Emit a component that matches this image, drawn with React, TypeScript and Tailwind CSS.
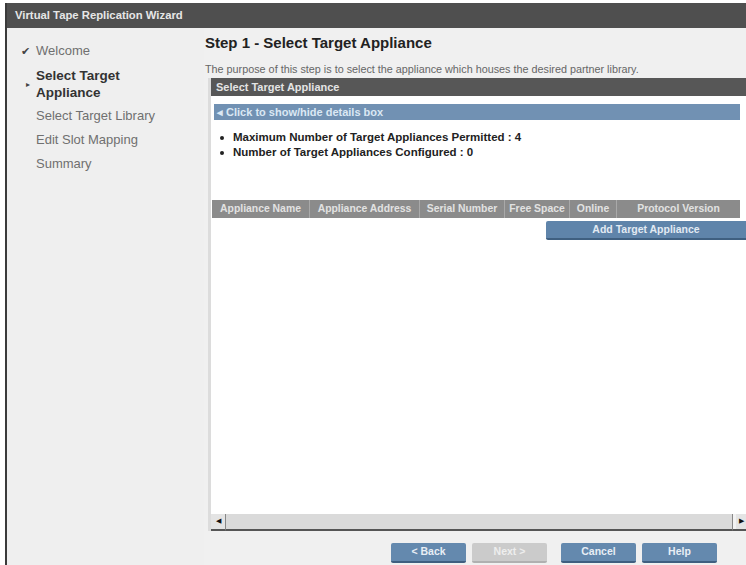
import React from "react";

const STEPS = [
  { label: "Welcome", state: "done" },
  { label: "Select Target Appliance", state: "current" },
  { label: "Select Target Library", state: "todo" },
  { label: "Edit Slot Mapping", state: "todo" },
  { label: "Summary", state: "todo" },
];

const COLUMNS = [
  { label: "Appliance Name", w: "w-[97px]" },
  { label: "Appliance Address", w: "w-[110px]" },
  { label: "Serial Number", w: "w-[85px]" },
  { label: "Free Space", w: "w-[65px]" },
  { label: "Online", w: "w-[47px]" },
  { label: "Protocol Version", w: "flex-1" },
];

function WizButton({ label, disabled }: { label: string; disabled?: boolean }) {
  return (
    <button
      type="button"
      disabled={disabled}
      className={`h-[20px] w-[75px] rounded-[2px] border-b-2 text-[10.5px] font-bold ${
        disabled
          ? "border-[#b0b0b0] bg-[#cbcbcb] text-[#eeeeee]"
          : "border-[#3f5f80] bg-[#6489ae] text-[#e8eef5]"
      }`}
    >
      {label}
    </button>
  );
}

export default function App() {
  return (
    <div
      className="h-[565px] w-[746px] overflow-hidden bg-white pl-[5px] pt-[3px]"
      style={{ fontFamily: '"Liberation Sans", Arial, sans-serif' }}
    >
      <div className="flex h-full flex-col border-l-2 border-[#3a3a3a]">
        {/* Title bar */}
        <div className="flex h-[25px] items-center bg-[#4f4f4f] pl-[8px] text-[11.3px] font-bold text-[#e6e6e6]">
          Virtual Tape Replication Wizard
        </div>

        <div className="flex min-h-0 flex-1">
          {/* Left — step list */}
          <div className="w-[197px] shrink-0 bg-[#efefef] pt-[15px] text-[13px] text-[#707070]">
            {STEPS.map((s) => (
              <div
                key={s.label}
                className={`flex items-start ${s.state === "current" ? "mb-[7px] mt-[3px]" : "mb-[8px]"}`}
              >
                <span className="flex w-[29px] shrink-0 justify-end pr-[6px] text-[#444]">
                  {s.state === "done" && <span className="text-[11px] leading-[16px]">✔</span>}
                  {s.state === "current" && <span className="mt-[10px] text-[8px] leading-[15px]">▸</span>}
                </span>
                <span
                  className={
                    s.state === "current"
                      ? "w-[100px] text-[13.5px] font-bold leading-[17px] text-[#333]"
                      : "leading-[16px]"
                  }
                >
                  {s.label}
                </span>
              </div>
            ))}
          </div>

          {/* Right — step content */}
          <div className="flex min-w-0 flex-1 flex-col bg-[#f0f0f0] pl-[1px]">
            <h1 className="mt-[6px] text-[15px] font-bold leading-[17px] text-[#222]">
              Step 1 - Select Target Appliance
            </h1>
            <p className="mt-[12px] text-[10.8px] leading-[12px] text-[#666]">
              The purpose of this step is to select the appliance which houses the desired partner library.
            </p>

            <div className="ml-[3px] mt-[3px] flex min-h-0 flex-1 flex-col border-l-[3px] border-[#dcdcdc]">
              <div className="flex h-[18px] items-center bg-[#575757] pl-[5px] text-[11px] font-bold text-[#e4e4e4]">
                Select Target Appliance
              </div>

              <div className="flex-1 bg-white pt-[8px]">
                <div className="ml-[3px] mr-[6px] flex h-[16px] items-center bg-[#7191b3] pl-[3px] text-[11px] font-bold text-[#dbe8f4]">
                  ◂ Click to show/hide details box
                </div>
                <ul className="mt-[12px] space-y-[4px] pl-[9px] text-[11.5px] font-bold leading-[11px] text-[#222]">
                  <li className="flex items-center gap-[9px]">
                    <span className="h-[4px] w-[4px] rounded-full bg-[#222]" />
                    Maximum Number of Target Appliances Permitted : 4
                  </li>
                  <li className="flex items-center gap-[9px]">
                    <span className="h-[4px] w-[4px] rounded-full bg-[#222]" />
                    Number of Target Appliances Configured : 0
                  </li>
                </ul>

                <div className="ml-[1px] mr-[6px] mt-[42px] flex h-[18px] bg-[#8b8b8b] text-[10.4px] font-bold text-[#e2e2e2]">
                  {COLUMNS.map((c, i) => (
                    <div
                      key={c.label}
                      className={`${c.w} flex items-center justify-center truncate ${
                        i > 0 ? "border-l border-[#a9a9a9]" : ""
                      }`}
                    >
                      {c.label}
                    </div>
                  ))}
                </div>
                <div className="mt-[3px] flex justify-end">
                  <button
                    type="button"
                    className="h-[19px] w-[200px] rounded-l-[2px] border-b-2 border-[#3f5f80] bg-[#5f84aa] text-[10.5px] font-bold text-[#e2eaf3]"
                  >
                    Add Target Appliance
                  </button>
                </div>
              </div>

              {/* Horizontal scrollbar */}
              <div className="flex h-[17px] items-stretch bg-white">
                <div className="flex w-[15px] items-center justify-center border-b-2 border-[#555] border-r border-r-[#888] bg-[#e4e4e4] text-[7px] text-[#111]">
                  ◀
                </div>
                <div className="flex-1 border-b-2 border-[#555] bg-[#dadada]" />
                <div className="w-[4px] border-b-2 border-[#555] border-l border-l-[#888] bg-[#f2f2f2]" />
                <div className="flex w-[10px] items-center justify-center border-b-2 border-[#555] bg-[#e4e4e4] text-[7px] text-[#111]">
                  ▶
                </div>
              </div>
            </div>

            {/* Footer */}
            <div className="flex h-[34px] items-start justify-end gap-[6px] pr-[29px] pt-[12px]">
              <WizButton label="< Back" />
              <WizButton label="Next >" disabled />
              <span className="w-[2px]" />
              <WizButton label="Cancel" />
              <WizButton label="Help" />
            </div>
          </div>
        </div>
      </div>
    </div>
  );
}
